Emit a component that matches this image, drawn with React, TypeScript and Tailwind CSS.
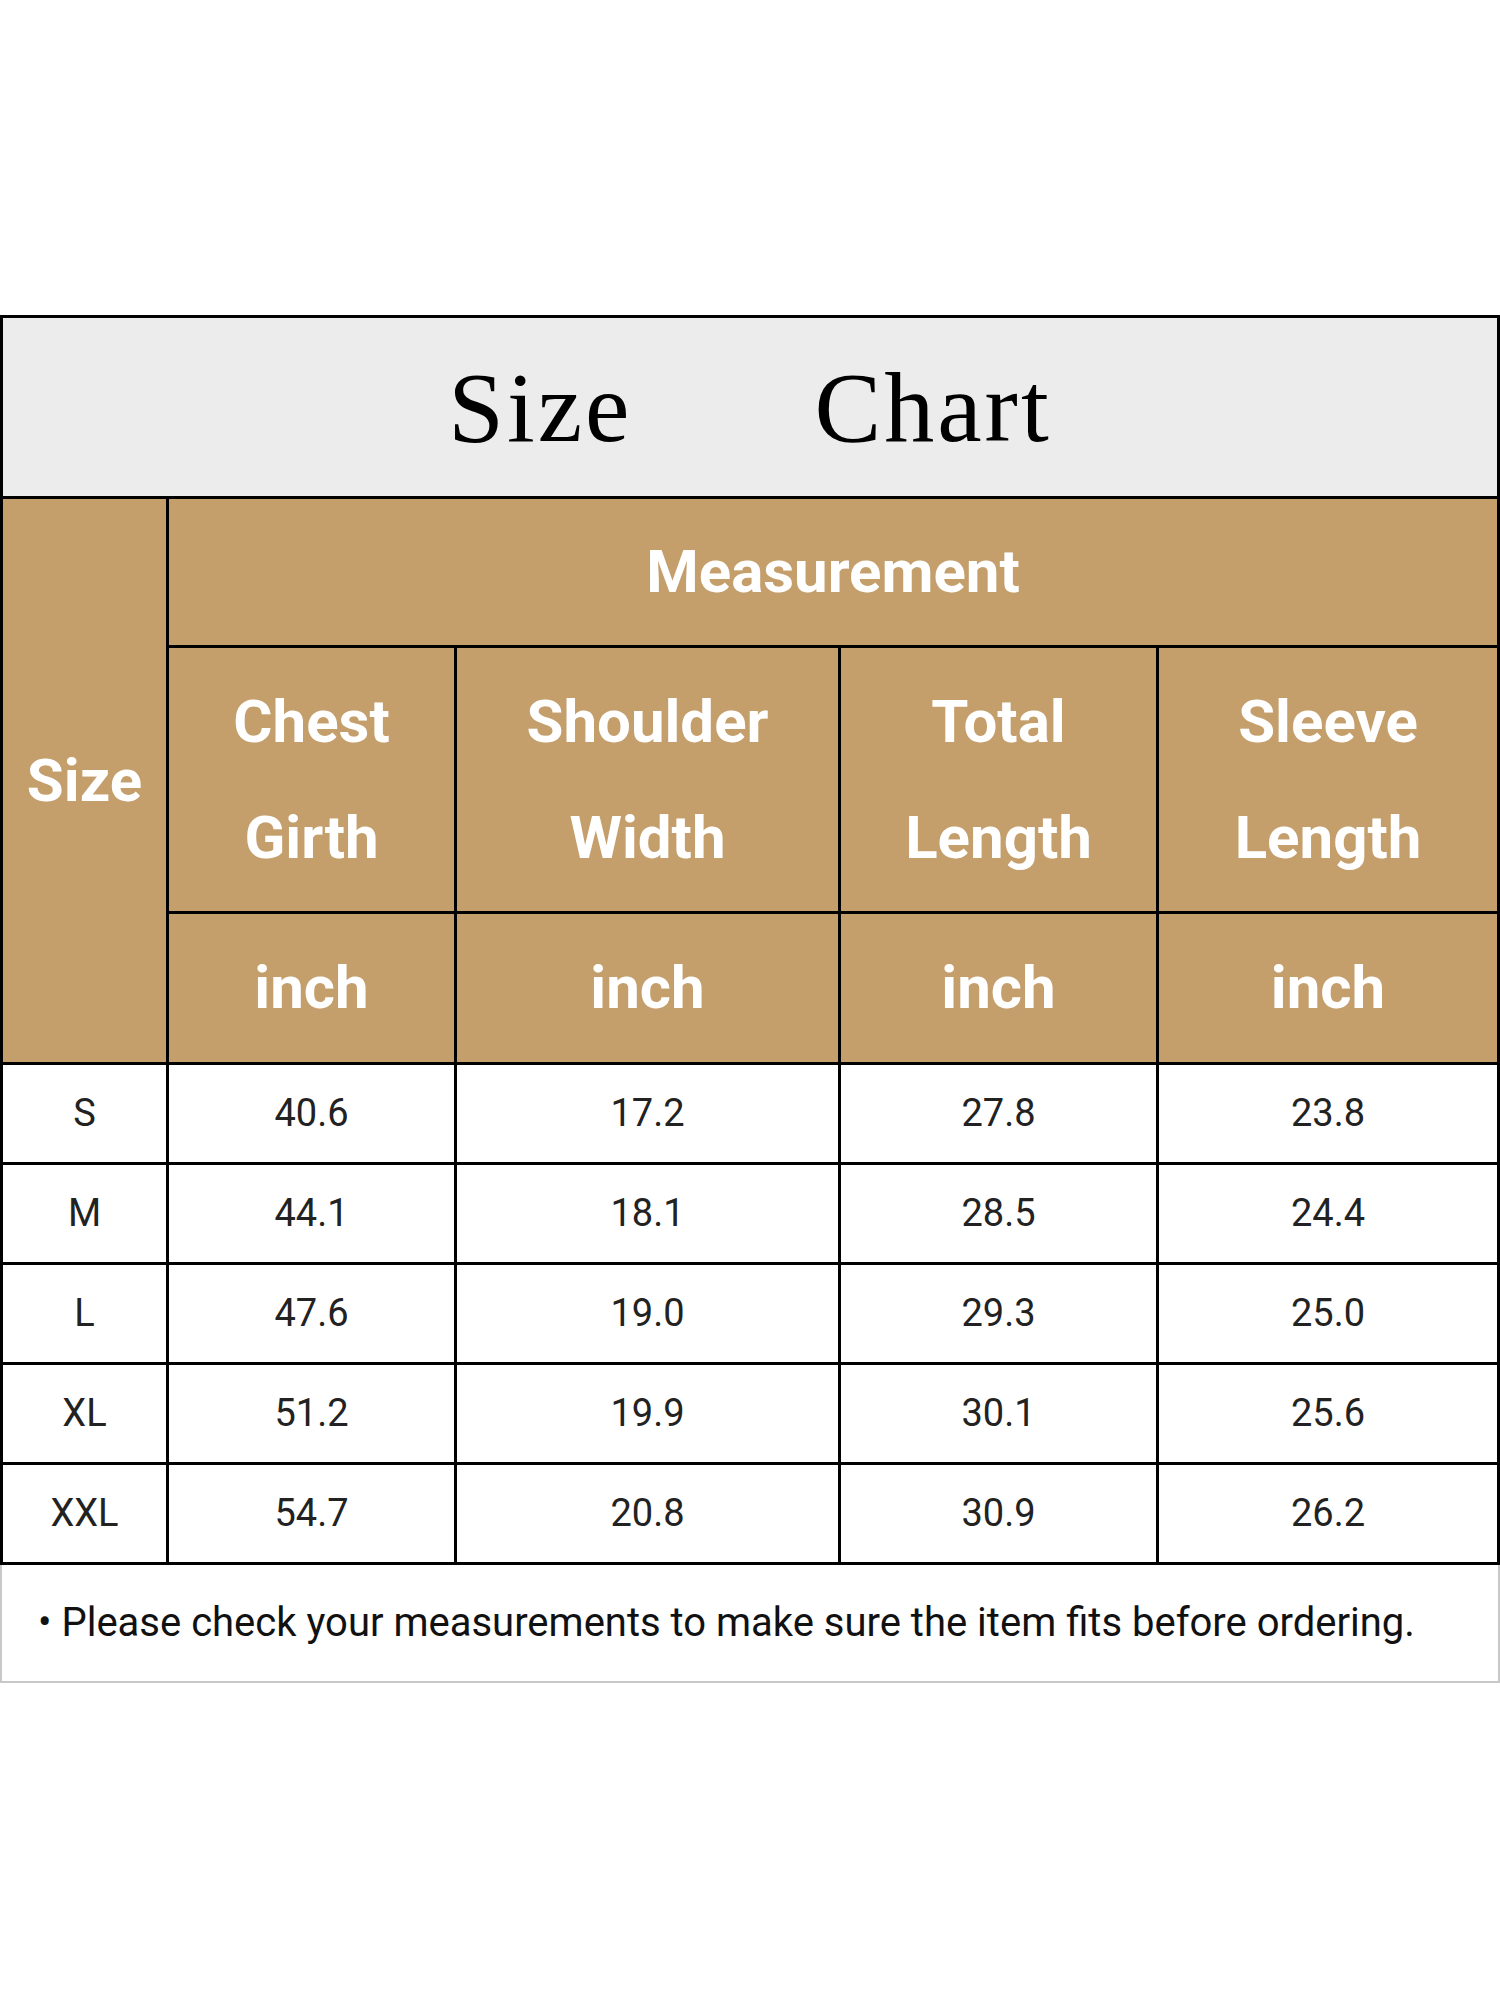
import React from "react"

const sizes = [
  { size: "S", chest: "40.6", shoulder: "17.2", length: "27.8", sleeve: "23.8" },
  { size: "M", chest: "44.1", shoulder: "18.1", length: "28.5", sleeve: "24.4" },
  { size: "L", chest: "47.6", shoulder: "19.0", length: "29.3", sleeve: "25.0" },
  { size: "XL", chest: "51.2", shoulder: "19.9", length: "30.1", sleeve: "25.6" },
  { size: "XXL", chest: "54.7", shoulder: "20.8", length: "30.9", sleeve: "26.2" },
]

const headers = [
  ["Chest", "Girth"],
  ["Shoulder", "Width"],
  ["Total", "Length"],
  ["Sleeve", "Length"],
]

export default function App() {
  return (
    <div className="w-[1500px] h-[2000px] bg-white pt-[315px] font-['Roboto',sans-serif]">
      {/* Title */}
      <div className="h-[181px] border-x-[3px] border-t-[3px] border-black bg-[#ececec] flex items-center justify-center gap-[182px] pt-[2px]">
        <span className="font-['Liberation_Serif',serif] text-[100px] leading-none tracking-[3px] text-black">Size</span>
        <span className="font-['Liberation_Serif',serif] text-[100px] leading-none tracking-[3px] text-black">Chart</span>
      </div>

      {/* Table */}
      <div className="grid grid-cols-[163px_285px_381px_315px_338px] grid-rows-[146px_263px_148px_repeat(5,97px)] gap-[3px] bg-black p-[3px]">
        <div className="row-span-3 bg-[#c49e6b] flex items-center justify-center text-white font-bold text-[60px]">
          Size
        </div>
        <div className="col-span-4 bg-[#c49e6b] flex items-center justify-center text-white font-bold text-[60px]">
          Measurement
        </div>
        {headers.map(([a, b], i) => (
          <div key={i} className="bg-[#c49e6b] flex flex-col items-center justify-center text-white font-bold text-[60px] leading-[116px]">
            <span>{a}</span>
            <span>{b}</span>
          </div>
        ))}
        {headers.map((_, i) => (
          <div key={i} className="bg-[#c49e6b] flex items-center justify-center text-white font-bold text-[60px]">
            inch
          </div>
        ))}
        {sizes.map((r) => (
          <React.Fragment key={r.size}>
            <div className="bg-white flex items-center justify-center text-[38px] text-[#222]">{r.size}</div>
            <div className="bg-white flex items-center justify-center text-[38px] text-[#222]">{r.chest}</div>
            <div className="bg-white flex items-center justify-center text-[38px] text-[#222]">{r.shoulder}</div>
            <div className="bg-white flex items-center justify-center text-[38px] text-[#222]">{r.length}</div>
            <div className="bg-white flex items-center justify-center text-[38px] text-[#222]">{r.sleeve}</div>
          </React.Fragment>
        ))}
      </div>

      {/* Note */}
      <div className="h-[118px] border-x-2 border-b-2 border-[#c8c8c8] flex items-center pl-[36px] text-[40px] text-[#111]">
        • Please check your measurements to make sure the item fits before ordering.
      </div>
    </div>
  )
}
